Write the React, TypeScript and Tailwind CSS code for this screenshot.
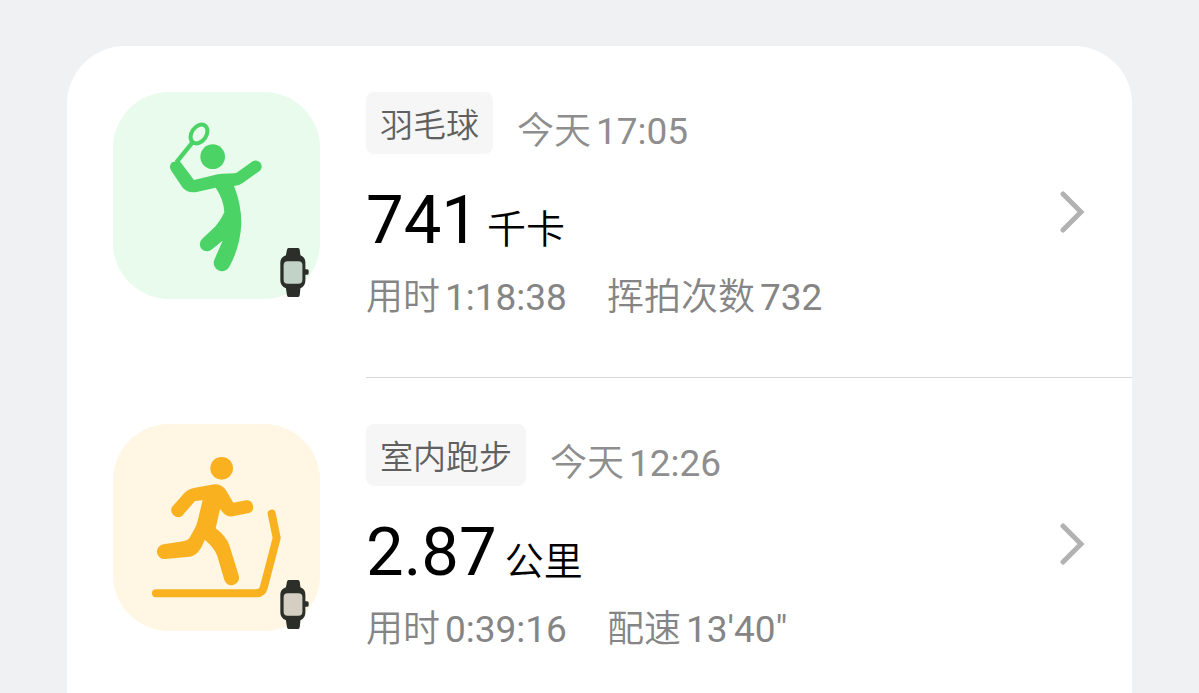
import type { ReactNode } from "react";

type Stat = { label: string; value: string };

type Workout = {
  id: string;
  sport: string;
  time: string;
  value: string;
  unit: string;
  stats: Stat[];
  icon: ReactNode;
  tile: string;
  watch: string;
};

function BadmintonIcon() {
  return (
    <svg className="w-full h-full" viewBox="39 36 621 621" fill="#4cd366" aria-hidden="true">
      <ellipse cx="297" cy="162" rx="22" ry="31" transform="rotate(35 297 162)" fill="none" stroke="#4cd366" strokeWidth="12" />
      <path d="M277 188L229 247" fill="none" stroke="#4cd366" strokeWidth="13" />
      <circle cx="338" cy="230" r="37" />
      <path d="M239 243L282 300L353 283Q360 281 368 281L404 280Q410 280 416 274L458 244A18 18 0 0 1 479 273L427 310Q416 318 402 318Q424 372 424 430Q421 500 389 558A24 24 0 0 1 343 539L368 482L336 508A21 21 0 0 1 306 477L345 440Q360 424 373 397Q372 360 347 323L290 336Q262 341 247 322L213 271Q205 256 217 246Z" />
    </svg>
  );
}

function TreadmillIcon() {
  return (
    <svg className="w-full h-full" viewBox="39 36 621 621" fill="#fab120" aria-hidden="true">
      <circle cx="365" cy="169" r="34" />
      <path d="M216 285L254 242Q266 230 285 227L335 218Q362 213 378 235L400 272L438 265A20 20 0 0 1 448 303L398 313Q380 315 371 304L360 291L347 349Q378 372 388 400L416 490A22 22 0 0 1 373 504L352 432Q344 408 314 383Q298 430 268 434L196 441A22 22 0 0 1 190 397L250 388Q266 386 273 370Q288 345 292 330L308 265L285 267L246 312A21 21 0 0 1 216 285Z" />
      <path d="M168 544H468Q486 544 491 528L530 378L515 305" fill="none" stroke="#fab120" strokeWidth="24" strokeLinecap="round" strokeLinejoin="round" />
    </svg>
  );
}

function WatchBadge({ className }: { className: string }) {
  return (
    <svg className={`absolute right-[11px] bottom-[2px] w-[29px] h-[49px] ${className}`} viewBox="44 38 88 148" aria-hidden="true">
      <path d="M70 38H99Q103 38 104 44L106 60Q121 66 121 82V102H126Q131 102 131 107V114Q131 119 126 119H121V136Q121 152 106 160L104 180Q103 186 99 186H70Q66 186 65 180L62 160Q45 152 45 136V82Q45 66 62 60L65 44Q66 38 70 38Z" fill="#2b2e29" />
      <rect x="55" y="78" width="57" height="68" rx="12" fill="currentColor" />
    </svg>
  );
}

const WORKOUTS: Workout[] = [
  {
    id: "badminton",
    sport: "羽毛球",
    time: "17:05",
    value: "741",
    unit: "千卡",
    stats: [
      { label: "用时", value: "1:18:38" },
      { label: "挥拍次数", value: "732" },
    ],
    icon: <BadmintonIcon />,
    tile: "bg-[#e9fbec]",
    watch: "text-[#c2d2c6]",
  },
  {
    id: "indoor-run",
    sport: "室内跑步",
    time: "12:26",
    value: "2.87",
    unit: "公里",
    stats: [
      { label: "用时", value: "0:39:16" },
      { label: "配速", value: "13'40\"" },
    ],
    icon: <TreadmillIcon />,
    tile: "bg-[#fff6e3]",
    watch: "text-[#d5cfc3]",
  },
];

function WorkoutRow({ workout, last }: { workout: Workout; last: boolean }) {
  return (
    <li>
      <a href={`#${workout.id}`} className="flex gap-[46px] pl-[46px]">
        <div className={`relative shrink-0 w-[207px] h-[207px] mt-[46px] rounded-[56px] ${workout.tile}`}>
          {workout.icon}
          <WatchBadge className={workout.watch} />
        </div>
        <div className={`flex flex-1 items-center justify-between pr-[47px] border-b ${last ? "border-transparent" : "border-[#d9d9d9]"}`}>
          <div className="pt-[46px] pb-[53px]">
            <div className="flex items-end gap-6">
              <span className="px-[14px] pt-[6px] rounded-lg bg-[#f6f6f6] text-[33px] leading-[56px] font-[350] text-[#606060]">
                {workout.sport}
              </span>
              <span className="flex gap-[5px] text-[37px] leading-[44px] text-[#8e8e8e]">
                <span className="font-[350]">今天</span>
                <time>{workout.time}</time>
              </span>
            </div>
            <p className="flex items-baseline gap-2 mt-[26px] text-black">
              <span className="text-[67px] leading-[80px]">{workout.value}</span>
              <span className="text-[39px] font-[350]">{workout.unit}</span>
            </p>
            <dl className="flex gap-10 mt-3 text-[37px] leading-[52px] text-[#858585]">
              {workout.stats.map((s) => (
                <div key={s.label} className="flex gap-[5px]">
                  <dt className="font-[350]">{s.label}</dt>
                  <dd>{s.value}</dd>
                </div>
              ))}
            </dl>
          </div>
          <svg className="shrink-0 w-[26px] h-[42px]" viewBox="0 0 26 42" fill="none" stroke="#b2b2b2" strokeWidth="5" strokeLinecap="round" aria-hidden="true">
            <path d="M4 3L22 21L4 39" />
          </svg>
        </div>
      </a>
    </li>
  );
}

export default function App() {
  return (
    <main className="min-h-screen bg-[#f0f1f3] pt-[46px] px-[67px] font-['Roboto','Noto_Sans_CJK_SC',sans-serif]">
      <ul className="bg-white rounded-t-[58px]">
        {WORKOUTS.map((w, i) => (
          <WorkoutRow key={w.id} workout={w} last={i === WORKOUTS.length - 1} />
        ))}
      </ul>
    </main>
  );
}
